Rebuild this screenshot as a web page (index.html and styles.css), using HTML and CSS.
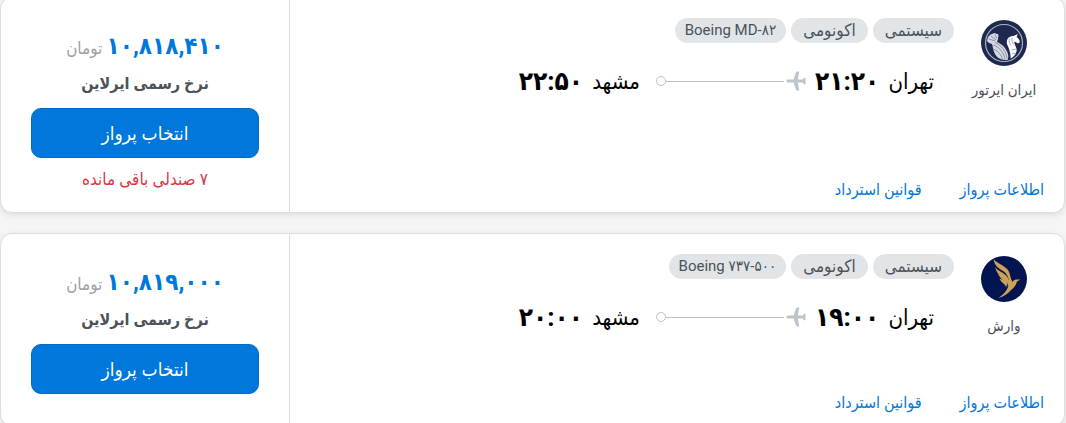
FILE: index.html
```html
<!DOCTYPE html>
<html lang="fa" dir="rtl">
<head>
  <meta charset="UTF-8">
  <meta name="viewport" content="width=device-width, initial-scale=1.0">
  <title>پرواز تهران به مشهد</title>
  <link rel="stylesheet" href="styles.css">
</head>
<body>
  <svg class="sprite" aria-hidden="true">
    <symbol id="plane" viewBox="0 0 20 20">
      <path d="M2 8.500h5.500L10 1.200c.3-.5.7-.7 1.200-.7h2L11.900 8.500h4.600L18 6.800h1.500v6.400H18l-1.500-1.700h-4.600l1.300 8h-2c-.5 0-.9-.2-1.200-.7L7.500 11.500H2C.8 11.500.5 10.700.5 10S.8 8.500 2 8.500z"/>
    </symbol>
  </svg>

  <main class="flights">
    <article class="flight-card">
      <div class="details">
        <div class="summary">
          <div class="airline">
            <svg class="logo" viewBox="0 0 46 46" role="img" aria-label="ایران ایرتور">
              <circle cx="23" cy="23" r="23" fill="#1d294f"/>
              <circle cx="23" cy="23" r="18.500" fill="none" stroke="#aeb4c5" stroke-width="1.200"/>
              <!-- wing -->
              <path d="M6 21l1-4 2.500-2.500 4-1.500 4 1.500-.5 4.500-1 3c5 2 9 6 11 12 .5 2 .5 4-.5 6-6 .5-11-2-13-7-1.500-3-1.500-6-2.500-9-2-.5-4-1.500-5-3z" fill="#d5d8e2"/>
              <path d="M8 19l6 2M10 16l5 4M14 14.500l1.500 4M12 25c7 2 11 8 12 15M14 22.500c7 3 11 9 12 16M12.500 29c5 2 8 6 9 11" fill="none" stroke="#6a728f" stroke-width=".7"/>
              <!-- horse -->
              <path d="M26 24c-1-5 2-8 6.500-8l4.500-2-1.500 3c2 1 3 3 3.500 5l-2 1.500-3.500-2c-1 3 3 6 2 10-1 3.500-3 5.500-6 7 .5-5-1.500-10-3.500-14.500z" fill="#fff"/>
              <path d="M28.500 18.500c-1 3 0 5 1.500 7M31 17.500c-.5 3 .5 5 1.500 7M30.500 30l5-1M31 34l3.500-1" fill="none" stroke="#8f96ae" stroke-width=".8"/>
            </svg>
            <span class="airline-name">ایران ایرتور</span>
          </div>
          <div class="trip">
            <ul class="tags">
              <li>سیستمی</li>
              <li>اکونومی</li>
              <li class="aircraft" dir="ltr">Boeing MD-۸۲</li>
            </ul>
            <div class="route">
              <span class="city">تهران</span>
              <time class="time">۲۱:۲۰</time>
              <div class="path">
                <svg class="plane" aria-hidden="true"><use href="#plane"/></svg>
                <span class="line"></span>
                <span class="dot"></span>
              </div>
              <span class="city">مشهد</span>
              <time class="time">۲۲:۵۰</time>
            </div>
          </div>
        </div>
        <nav class="links">
          <a href="#info">اطلاعات پرواز</a>
          <a href="#refund">قوانین استرداد</a>
        </nav>
      </div>
      <div class="booking">
        <p class="price"><strong>۱۰,۸۱۸,۴۱۰</strong> <span>تومان</span></p>
        <p class="rate">نرخ رسمی ایرلاین</p>
        <button type="button" class="select">انتخاب پرواز</button>
        <p class="seats">۷ صندلی باقی مانده</p>
      </div>
    </article>

    <article class="flight-card">
      <div class="details">
        <div class="summary">
          <div class="airline">
            <svg class="logo" viewBox="0 0 46 46" role="img" aria-label="وارش">
              <circle cx="23" cy="23" r="23" fill="#031551"/>
              <path d="M12.500 3.500c4 4 9 5 13 9 4 3.500 3 8 6 13.500 1-2 2.500-2.500 5-2.500h3l-3.500 2c-1 4-3 6-6.500 9-3 3.500-7 6-12 7.500 5-3.500 8-7 9.500-11 2-5 1-12-5-16-4-2.500-8-4.500-9.500-11.500z" fill="#cda157"/>
              <path d="M14 10.500c2 5 9 5 13 11.500 1.500 3 1.500 6 .5 9-.5-10-11-8-13.500-20.500z" fill="#cda157"/>
              <path d="M17 17.500c4 2 8 4 9.500 9l-.3 4c-1-6-7.200-7-9.200-13zM18.500 22.500c3.500 1 6 3 7 6l-.3 3c-1-4-5.200-4.500-6.700-9z" fill="#cda157"/>
            </svg>
            <span class="airline-name">وارش</span>
          </div>
          <div class="trip">
            <ul class="tags">
              <li>سیستمی</li>
              <li>اکونومی</li>
              <li class="aircraft" dir="ltr">Boeing &lrm;۷۳۷-۵۰۰</li>
            </ul>
            <div class="route">
              <span class="city">تهران</span>
              <time class="time">۱۹:۰۰</time>
              <div class="path">
                <svg class="plane" aria-hidden="true"><use href="#plane"/></svg>
                <span class="line"></span>
                <span class="dot"></span>
              </div>
              <span class="city">مشهد</span>
              <time class="time">۲۰:۰۰</time>
            </div>
          </div>
        </div>
        <nav class="links">
          <a href="#info">اطلاعات پرواز</a>
          <a href="#refund">قوانین استرداد</a>
        </nav>
      </div>
      <div class="booking">
        <p class="price"><strong>۱۰,۸۱۹,۰۰۰</strong> <span>تومان</span></p>
        <p class="rate">نرخ رسمی ایرلاین</p>
        <button type="button" class="select">انتخاب پرواز</button>
      </div>
    </article>
  </main>
</body>
</html>
```
FILE: styles.css
```css
* {
  box-sizing: border-box;
}
body {
  margin: 0;
  background-color: #f5f5f5;
  color: #000;
  font-family: Roboto, "DejaVu Sans Condensed", "DejaVu Sans", sans-serif;
  font-size: 16px;
  overflow: hidden;
}
p, ul {
  margin: 0;
  padding: 0;
}
.sprite {
  display: none;
}
.flights {
  display: flex;
  flex-direction: column;
  gap: 20px;
  margin-top: -3px;
  margin-right: 1px;
}

/* Card */
.flight-card {
  display: flex;
  min-height: 193px;
  background: #fff;
  border: 1px solid #dedede;
  border-radius: 12px;
  box-shadow: 0 2px 6px rgba(0, 0, 0, 0.1);
}
.details {
  flex: 1;
  display: flex;
  flex-direction: column;
  justify-content: space-between;
  padding: 20px 20px 10px;
}
.summary {
  display: flex;
  gap: 10px;
}

/* Airline */
.airline {
  width: 80px;
  display: flex;
  flex-direction: column;
  align-items: center;
  gap: 12px;
  padding-top: 2px;
}
.logo {
  width: 46px;
  height: 46px;
}
.airline-name {
  color: #4b5259;
  font-size: 15px;
  line-height: 24px;
  white-space: nowrap;
}

/* Tags */
.tags {
  display: flex;
  gap: 5px;
  list-style: none;
}
.tags li {
  height: 25px;
  padding: 0 12px;
  border-radius: 13px;
  background-color: #e1e5e8;
  color: #4b5259;
  font-size: 17px;
  line-height: 25px;
  white-space: nowrap;
}
.tags .aircraft {
  padding: 0 10px;
  font-size: 15px;
}

/* Route */
.route {
  display: flex;
  align-items: center;
  margin: 20px 20px 0 0;
  height: 36px;
  white-space: nowrap;
}
.city {
  font-size: 22px;
}
.time {
  margin-right: 9px;
  font-size: 26px;
  font-weight: bold;
}
.path {
  display: flex;
  align-items: center;
  width: 150px;
  margin: 0 9px 0 16px;
}
.plane {
  width: 20px;
  height: 20px;
  margin-left: 2px;
  fill: #bdc4ca;
}
.line {
  flex: 1;
  height: 1px;
  background-color: #bdc4ca;
}
.dot {
  width: 10px;
  height: 10px;
  border: 1px solid #bdc4ca;
  border-radius: 50%;
}

/* Links */
.links {
  display: flex;
  gap: 38px;
}
.links a {
  color: #0077db;
  line-height: 24px;
  text-decoration: none;
}

/* Booking */
.booking {
  width: 289px;
  padding: 30px 30px 19px;
  border-right: 1px solid #dedede;
  text-align: center;
}
.price {
  color: #9aa0a6;
  font-size: 17px;
  line-height: 36px;
}
.price strong {
  color: #0077db;
  font-size: 24px;
}
.rate {
  color: #4b5259;
  font-size: 16px;
  font-weight: bold;
  line-height: 36px;
}
.select {
  display: block;
  width: 100%;
  height: 50px;
  margin-top: 6px;
  border: 1px solid #006bc5;
  border-radius: 10px;
  background-color: #0077db;
  color: #fff;
  font-family: inherit;
  font-size: 19px;
  cursor: pointer;
}
.seats {
  margin-top: 7px;
  color: #dc3545;
  font-size: 17px;
  line-height: 28px;
}
```
